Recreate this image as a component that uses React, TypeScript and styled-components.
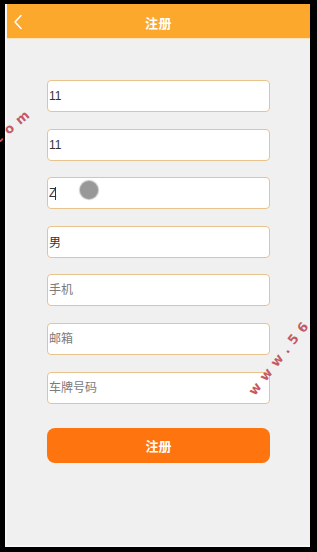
import React from "react";
import styled, { createGlobalStyle } from "styled-components";

const GlobalStyle = createGlobalStyle`
  html, body {
    margin: 0;
    padding: 0;
    background: #000;
  }
  * {
    box-sizing: border-box;
  }
`;

const Frame = styled.div`
  position: relative;
  width: 317px;
  height: 552px;
  padding: 4px 7px 5px 5px;
  background: #000;
  overflow: hidden;
  font-family: "Liberation Sans", "Noto Sans CJK SC", sans-serif;
`;

const Screen = styled.div`
  height: 100%;
  display: flex;
  flex-direction: column;
  background: #f0f0f0;
  border-left: 2px solid #f7f7f7;
  border-bottom: 2px solid #f7f7f7;
`;

const Header = styled.div`
  height: 35px;
  flex-shrink: 0;
  display: grid;
  grid-template-columns: 1fr auto 1fr;
  align-items: center;
  padding: 2px 6px 0;
  background: #fca82c;
  border-bottom: 1px solid #fbe3bd;
`;

const BackButton = styled.div`
  display: flex;
  align-items: center;
  height: 18px;
`;

const Title = styled.h1`
  margin: 0;
  font-size: 13px;
  font-weight: 700;
  color: #fff;
  letter-spacing: 0.5px;
`;

const Form = styled.form`
  display: flex;
  flex-direction: column;
  gap: 16.6px;
  padding: 41px 38px 0 40px;
`;

const Field = styled.div`
  position: relative;
`;

const Input = styled.input`
  display: block;
  width: 223px;
  height: 32px;
  padding: 0 1px;
  border: 1px solid #e9c38c;
  border-radius: 4px;
  background: #fff;
  font-family: "Liberation Sans", "Noto Sans CJK SC", sans-serif;
  font-size: 12px;
  color: #333;
  outline: none;

  &::placeholder {
    color: #7a7a7a;
  }
`;

const Caret = styled.span`
  position: absolute;
  left: 8px;
  top: 10px;
  width: 1px;
  height: 13px;
  background: #333;
`;

const Submit = styled.button`
  margin-top: 8px;
  width: 223px;
  height: 35px;
  border: none;
  border-radius: 8px;
  background: #fe7510;
  color: #fff;
  font-family: "Liberation Sans", "Noto Sans CJK SC", sans-serif;
  font-size: 13px;
  font-weight: 700;
  cursor: pointer;
`;

const Touch = styled.div`
  position: absolute;
  left: 80px;
  top: 181px;
  width: 18px;
  height: 18px;
  border-radius: 50%;
  background: #989898;
  box-shadow: 0 0 1px 1px #c4c4c4;
`;

const Watermark = styled.div<{ $left: number; $top: number; $angle: number }>`
  position: absolute;
  left: ${(p) => p.$left}px;
  top: ${(p) => p.$top}px;
  transform: rotate(${(p) => p.$angle}deg);
  transform-origin: left bottom;
  color: #c45b64;
  font-family: "DejaVu Sans", sans-serif;
  font-size: 13px;
  font-weight: 700;
  line-height: 14px;
  letter-spacing: 6px;
  white-space: nowrap;
  pointer-events: none;
`;

const fields = [
  { value: "11", placeholder: "" },
  { value: "11", placeholder: "" },
  { value: "Z", placeholder: "", caret: true },
  { value: "男", placeholder: "" },
  { value: "", placeholder: "手机" },
  { value: "", placeholder: "邮箱" },
  { value: "", placeholder: "车牌号码" },
];

export default function App() {
  return (
    <>
      <GlobalStyle />
      <Frame>
        <Screen>
          <Header>
            <BackButton>
              <svg width="10" height="16" viewBox="0 0 10 16">
                <path d="M8 1.5L2 8l6 6.5" fill="none" stroke="#fff" strokeWidth="1.6" strokeLinecap="round" strokeLinejoin="round" />
              </svg>
            </BackButton>
            <Title>注册</Title>
          </Header>
          <Form onSubmit={(e) => e.preventDefault()}>
            {fields.map((f, i) => (
              <Field key={i}>
                <Input defaultValue={f.value} placeholder={f.placeholder} />
                {f.caret && <Caret />}
              </Field>
            ))}
            <Submit type="submit">注册</Submit>
          </Form>
        </Screen>
        <Touch />
        <Watermark $left={0} $top={132} $angle={-40}>com</Watermark>
        <Watermark $left={257} $top={384} $angle={-52}>www.56</Watermark>
      </Frame>
    </>
  );
}
